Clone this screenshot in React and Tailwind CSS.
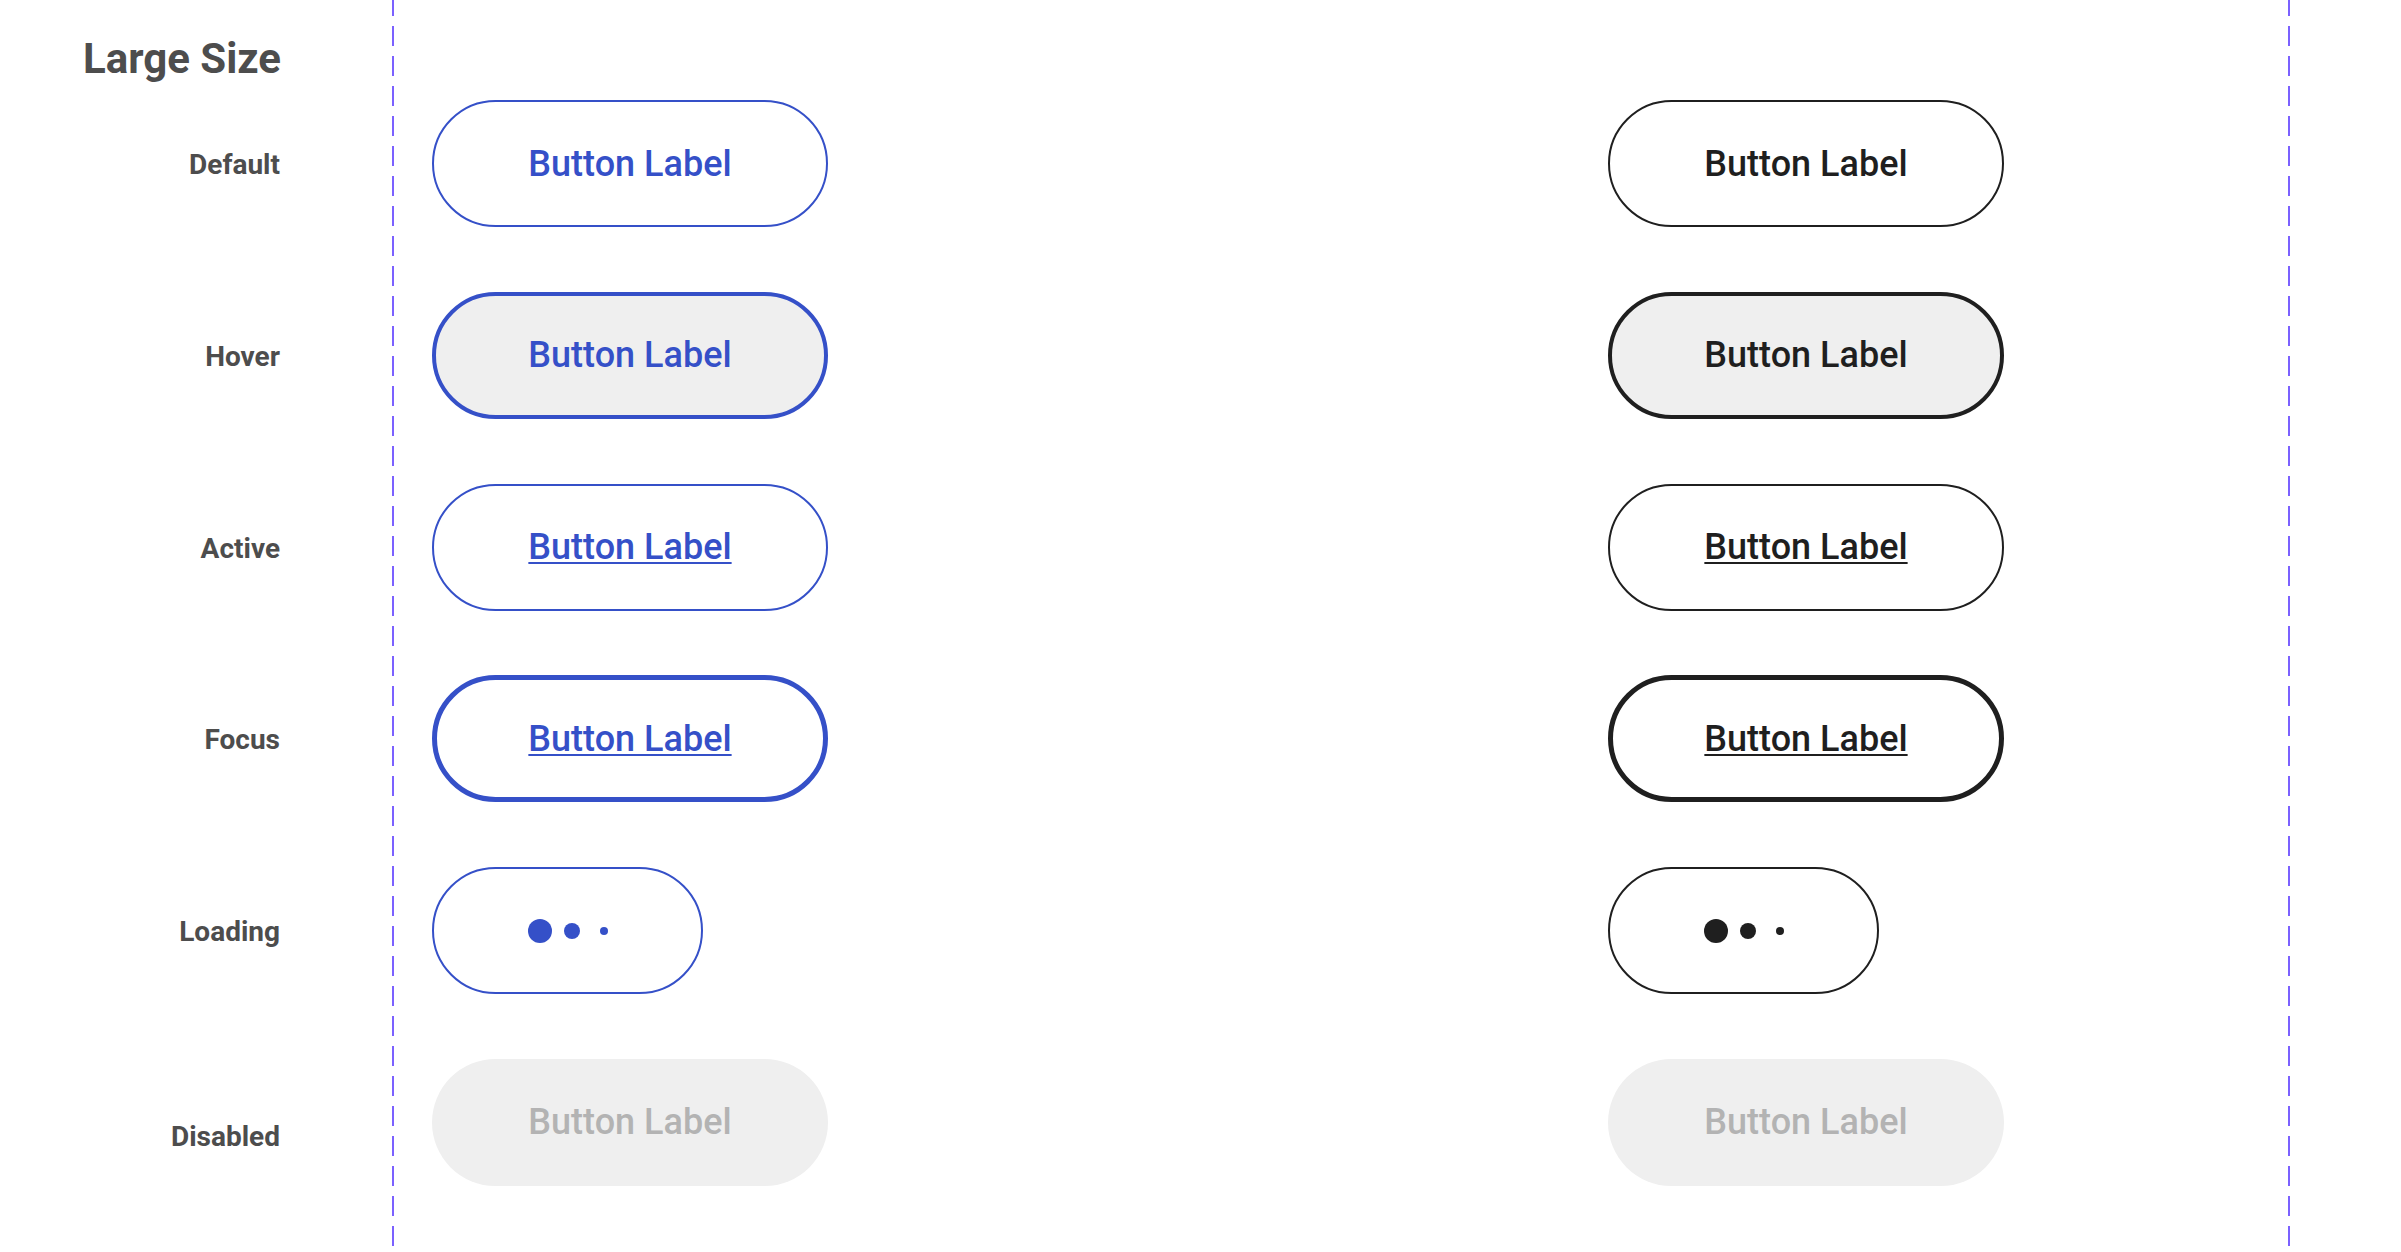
const rows = ['Default', 'Hover', 'Active', 'Focus', 'Loading', 'Disabled']

const blue = {
  Default: 'border-2 border-[#3550c8] text-[#3550c8]',
  Hover: 'border-4 border-[#3550c8] bg-[#efefef] text-[#3550c8]',
  Active: 'border-2 border-[#3550c8] text-[#3550c8] underline decoration-2 underline-offset-[3px]',
  Focus: 'border-[5px] border-[#3550c8] text-[#3550c8] underline decoration-2 underline-offset-[3px]',
  Loading: 'border-2 border-[#3550c8] text-[#3550c8]',
  Disabled: 'bg-[#efefef] text-[#b3b3b3]',
}

const dark = {
  Default: 'border-2 border-[#1f1f1f] text-[#1f1f1f]',
  Hover: 'border-4 border-[#1f1f1f] bg-[#efefef] text-[#1f1f1f]',
  Active: 'border-2 border-[#1f1f1f] text-[#1f1f1f] underline decoration-2 underline-offset-[3px]',
  Focus: 'border-[5px] border-[#1f1f1f] text-[#1f1f1f] underline decoration-2 underline-offset-[3px]',
  Loading: 'border-2 border-[#1f1f1f] text-[#1f1f1f]',
  Disabled: 'bg-[#efefef] text-[#b3b3b3]',
}

function Dots() {
  return (
    <div className="flex items-center gap-2 pl-[9px]">
      <span className="flex w-6 h-6 items-center justify-center">
        <span className="w-6 h-6 rounded-full bg-current" />
      </span>
      <span className="flex w-6 h-6 items-center justify-center">
        <span className="w-4 h-4 rounded-full bg-current" />
      </span>
      <span className="flex w-6 h-6 items-center justify-center">
        <span className="w-2 h-2 rounded-full bg-current" />
      </span>
    </div>
  )
}

function Btn({ state, tone }) {
  const cls = tone === 'blue' ? blue[state] : dark[state]
  const width = state === 'Loading' ? 'w-[271px]' : 'w-[396px]'
  return (
    <div className={`flex items-center justify-center h-[127px] rounded-full shrink-0 ${width} ${cls}`}>
      {state === 'Loading' ? (
        <Dots />
      ) : (
        <span className="text-[36px] font-medium leading-none">Button Label</span>
      )}
    </div>
  )
}

export default function App() {
  return (
    <div className="flex h-[1252px] w-full bg-white font-['Roboto','Liberation_Sans',sans-serif]">
      <div className="w-[392px] shrink-0 flex flex-col">
        <div className="h-[100px] pt-[38px] pl-[83px]">
          <h1 className="text-[42px] font-bold leading-none text-[#4d4d4d]">Large Size</h1>
        </div>
        <div className="flex flex-col gap-[64.8px] pr-[112px]">
          {rows.map((r) => (
            <div
              key={r}
              className={`h-[127px] flex items-center justify-end text-[28px] font-bold leading-none text-[#4d4d4d] ${r === 'Disabled' ? 'pt-[30px]' : 'pt-[3px]'}`}
            >
              {r}
            </div>
          ))}
        </div>
      </div>

      <div className="w-[2px] h-full shrink-0 bg-[repeating-linear-gradient(to_bottom,#7b61ff_0_16px,transparent_16px_26px,#7b61ff_26px_30px)]" />

      <div className="w-[1894px] shrink-0 pt-[100px] pl-[38px] flex flex-col gap-[64.8px]">
        {rows.map((r) => (
          <div key={r} className="flex">
            <div className="w-[1176px] shrink-0">
              <Btn state={r} tone="blue" />
            </div>
            <Btn state={r} tone="dark" />
          </div>
        ))}
      </div>

      <div className="w-[2px] h-full shrink-0 bg-[repeating-linear-gradient(to_bottom,#7b61ff_0_16px,transparent_16px_26px,#7b61ff_26px_30px)]" />

      <div className="flex-1" />
    </div>
  )
}
